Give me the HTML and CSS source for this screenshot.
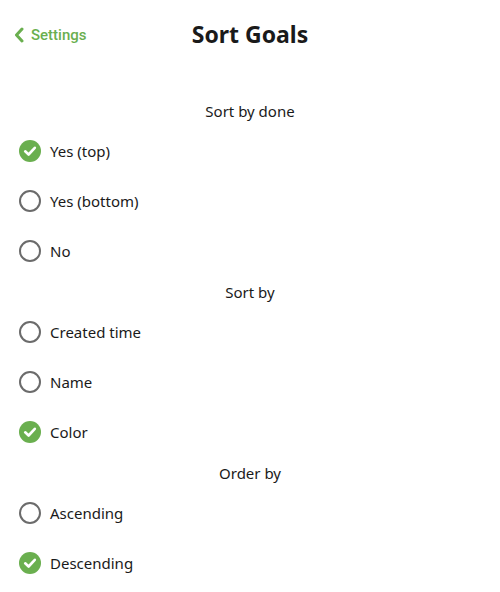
FILE: index.html
```html
<!DOCTYPE html>
<html>
<head>
<meta charset="utf-8">
<link rel="stylesheet" href="styles.css">
</head>
<body>
<div class="app">
  <header class="nav">
    <a class="back">
      <svg class="chev" width="10" height="16" viewBox="0 0 10 16"><path d="M8 2 L2.5 8 L8 14" fill="none" stroke="#6aaf4f" stroke-width="3" stroke-linecap="round" stroke-linejoin="round"/></svg>
      <span>Settings</span>
    </a>
    <h1 class="title">Sort Goals</h1>
  </header>
  <main class="list">
    <div class="section">Sort by done</div>
    <div class="row"><span class="radio on"><svg viewBox="0 0 22 22"><circle cx="11" cy="11" r="11" fill="#6aaf4f"/><path d="M6.2 11.3 L9.6 14.5 L15.8 7.8" fill="none" stroke="#fff" stroke-width="2.6" stroke-linecap="round" stroke-linejoin="round"/></svg></span><span class="label">Yes (top)</span></div>
    <div class="row"><span class="radio"></span><span class="label">Yes (bottom)</span></div>
    <div class="row"><span class="radio"></span><span class="label">No</span></div>
    <div class="section">Sort by</div>
    <div class="row"><span class="radio"></span><span class="label">Created time</span></div>
    <div class="row"><span class="radio"></span><span class="label">Name</span></div>
    <div class="row"><span class="radio on"><svg viewBox="0 0 22 22"><circle cx="11" cy="11" r="11" fill="#6aaf4f"/><path d="M6.2 11.3 L9.6 14.5 L15.8 7.8" fill="none" stroke="#fff" stroke-width="2.6" stroke-linecap="round" stroke-linejoin="round"/></svg></span><span class="label">Color</span></div>
    <div class="section">Order by</div>
    <div class="row"><span class="radio"></span><span class="label">Ascending</span></div>
    <div class="row"><span class="radio on"><svg viewBox="0 0 22 22"><circle cx="11" cy="11" r="11" fill="#6aaf4f"/><path d="M6.2 11.3 L9.6 14.5 L15.8 7.8" fill="none" stroke="#fff" stroke-width="2.6" stroke-linecap="round" stroke-linejoin="round"/></svg></span><span class="label">Descending</span></div>
  </main>
</div>
</body>
</html>
```
FILE: styles.css
```css
html, body {
  margin: 0;
  padding: 0;
  background: #fff;
}
.app {
  width: 500px;
  height: 592px;
  overflow: hidden;
  font-family: "Noto Sans", "Open Sans", sans-serif;
  color: #1a1a1a;
}
.nav {
  height: 70px;
  display: flex;
  align-items: center;
  justify-content: center;
  position: relative;
}
.back {
  position: absolute;
  left: 14px;
  top: 26px;
  display: flex;
  align-items: center;
  gap: 7px;
  color: #6aaf4f;
  font-family: Roboto, sans-serif;
  font-weight: 500;
  font-size: 15px;
}
.chev {
  display: block;
}
.title {
  margin: 0;
  font-size: 23px;
  font-weight: 700;
  color: #1a1a1a;
  position: relative;
  top: -1px;
}
.list {
  padding-top: 25px;
  display: flex;
  flex-direction: column;
}
.section {
  height: 31px;
  display: flex;
  align-items: center;
  justify-content: center;
  font-size: 15px;
}
.row {
  height: 50px;
  display: flex;
  align-items: center;
  padding-left: 19px;
  gap: 9px;
  font-size: 15px;
}
.radio {
  width: 22px;
  height: 22px;
  box-sizing: border-box;
  border: 2px solid #6b6b6b;
  border-radius: 50%;
  display: block;
}
.radio.on {
  border: none;
}
.radio svg {
  display: block;
  width: 22px;
  height: 22px;
}
```
